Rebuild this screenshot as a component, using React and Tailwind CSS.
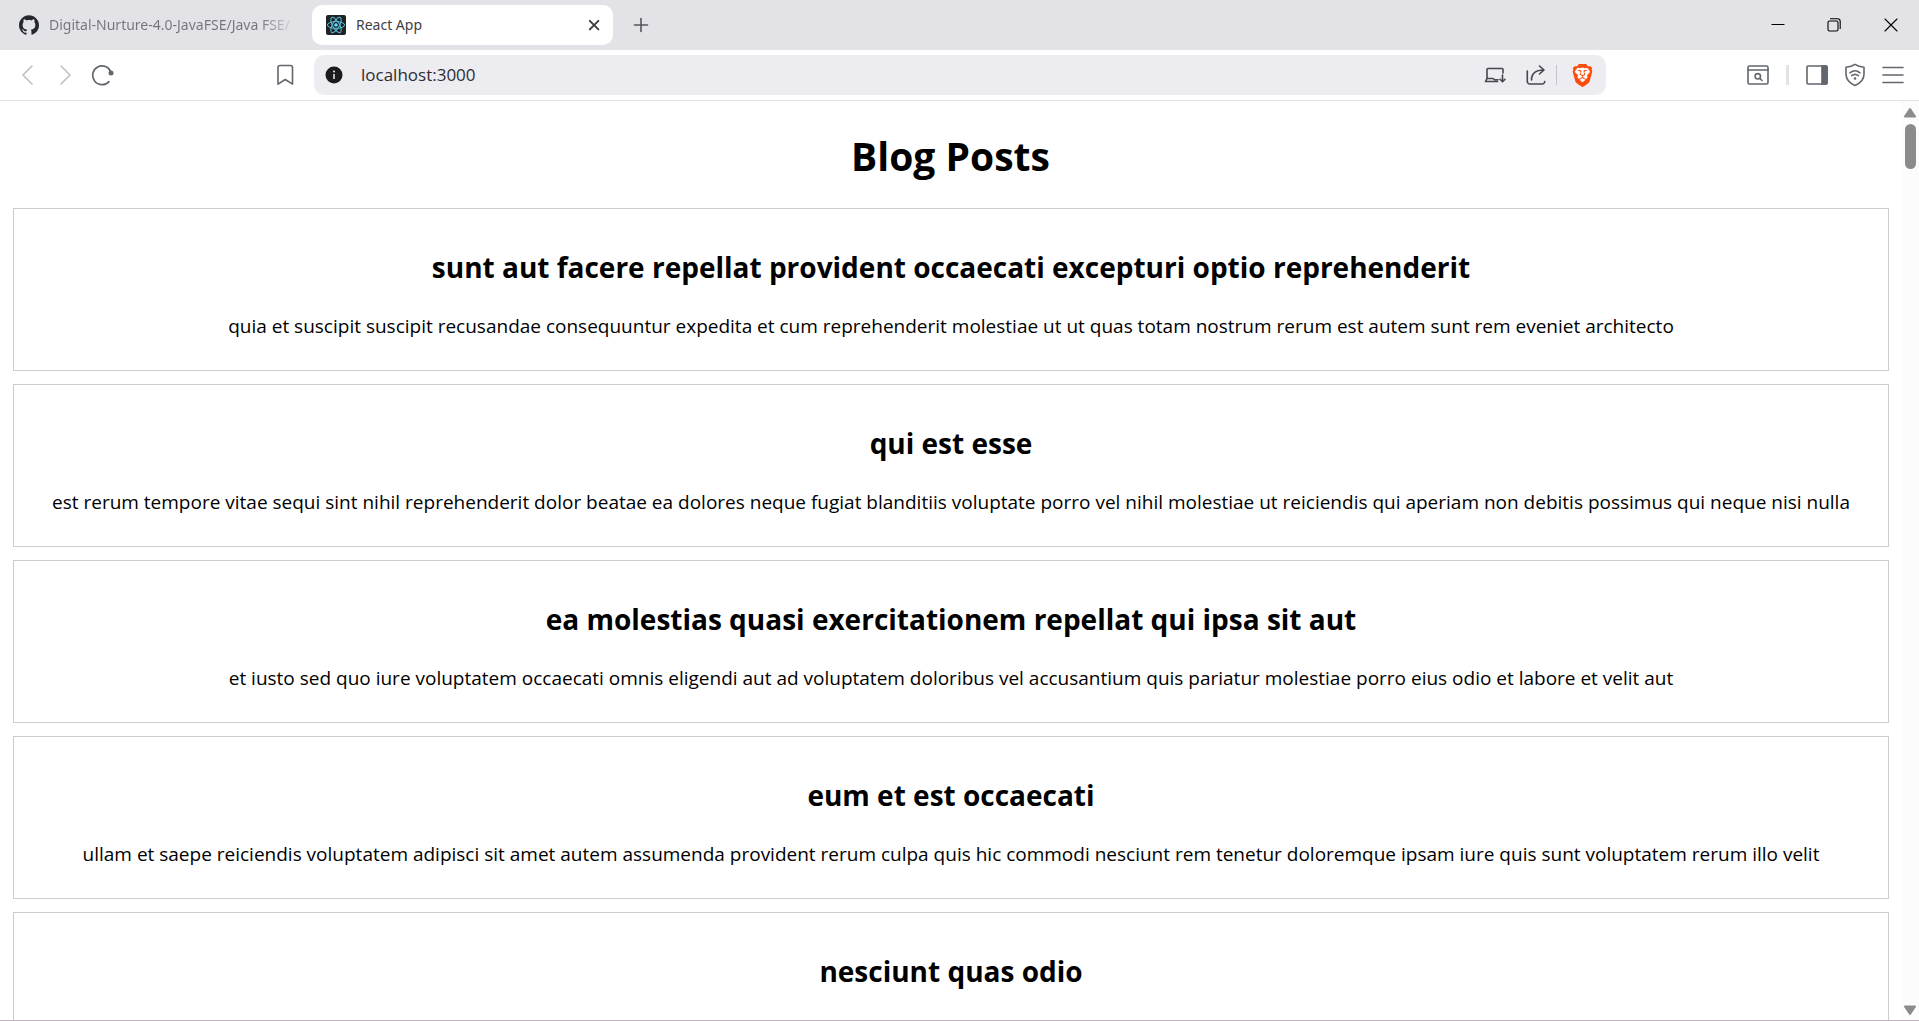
import React from "react";
import { SiBrave, SiGithub } from "react-icons/si";

const POSTS = [
  {
    title: "sunt aut facere repellat provident occaecati excepturi optio reprehenderit",
    body: "quia et suscipit suscipit recusandae consequuntur expedita et cum reprehenderit molestiae ut ut quas totam nostrum rerum est autem sunt rem eveniet architecto",
  },
  {
    title: "qui est esse",
    body: "est rerum tempore vitae sequi sint nihil reprehenderit dolor beatae ea dolores neque fugiat blanditiis voluptate porro vel nihil molestiae ut reiciendis qui aperiam non debitis possimus qui neque nisi nulla",
  },
  {
    title: "ea molestias quasi exercitationem repellat qui ipsa sit aut",
    body: "et iusto sed quo iure voluptatem occaecati omnis eligendi aut ad voluptatem doloribus vel accusantium quis pariatur molestiae porro eius odio et labore et velit aut",
  },
  {
    title: "eum et est occaecati",
    body: "ullam et saepe reiciendis voluptatem adipisci sit amet autem assumenda provident rerum culpa quis hic commodi nesciunt rem tenetur doloremque ipsam iure quis sunt voluptatem rerum illo velit",
  },
  { title: "nesciunt quas odio", body: "" },
];

function Icon({ size = 24, className = "", children, ...rest }) {
  return (
    <svg
      width={size}
      height={size}
      viewBox={`0 0 ${size} ${size}`}
      fill="none"
      stroke="currentColor"
      strokeWidth="1.6"
      strokeLinecap="round"
      strokeLinejoin="round"
      className={className}
      aria-hidden="true"
      {...rest}
    >
      {children}
    </svg>
  );
}

function IconButton({ label, className = "", children }) {
  return (
    <button type="button" aria-label={label} className={`flex shrink-0 items-center justify-center ${className}`}>
      {children}
    </button>
  );
}

function ReactLogo() {
  return (
    <svg width="20" height="20" viewBox="0 0 20 20" className="shrink-0" aria-hidden="true">
      <rect width="20" height="20" rx="2" fill="#222222" />
      <g fill="none" stroke="#53c1de" strokeWidth="1">
        <ellipse cx="10" cy="10" rx="8.6" ry="3.4" />
        <ellipse cx="10" cy="10" rx="8.6" ry="3.4" transform="rotate(60 10 10)" />
        <ellipse cx="10" cy="10" rx="8.6" ry="3.4" transform="rotate(120 10 10)" />
      </g>
      <circle cx="10" cy="10" r="1.8" fill="#61dafb" />
    </svg>
  );
}

function TabStrip() {
  return (
    <div className="flex h-[50px] shrink-0 items-center bg-[#e3e2e7] font-['Noto_Sans','Open_Sans',sans-serif]">
      <div className="flex w-[312px] shrink-0 items-center pl-[19px]">
        <SiGithub size={20} color="#24292f" className="shrink-0" />
        <span className="ml-[10px] w-[248px] overflow-hidden whitespace-nowrap bg-gradient-to-r from-[#74747a] from-85% to-transparent bg-clip-text text-[14px] leading-5 text-transparent">
          Digital-Nurture-4.0-JavaFSE/Java FSE/
        </span>
      </div>
      <div className="flex h-10 w-[301px] shrink-0 items-center rounded-[10px] bg-white pl-[14px] pr-[9px]">
        <ReactLogo />
        <span className="ml-[10px] flex-1 text-[14px] leading-5 text-[#3f4045]">React App</span>
        <IconButton label="Close tab" className="size-5">
          <Icon size={20} strokeWidth="1.9" className="text-[#3b3c40]">
            <path d="M5.8 5.8l8.6 8.6M14.4 5.8l-8.6 8.6" />
          </Icon>
        </IconButton>
      </div>
      <IconButton label="New tab" className="ml-4 size-6">
        <Icon className="text-[#55565b]">
          <path d="M12 5.5v13M5.5 12h13" />
        </Icon>
      </IconButton>
      <div className="ml-auto flex">
        <IconButton label="Minimize" className="h-[50px] w-[57px]">
          <Icon size={14} strokeWidth="1" strokeLinecap="butt" className="text-black">
            <path d="M0.5 6.5h13" />
          </Icon>
        </IconButton>
        <IconButton label="Restore" className="h-[50px] w-14">
          <Icon size={14} strokeWidth="1.1" className="text-black">
            <rect x="1" y="3" width="10" height="10" rx="1.5" />
            <path d="M3.5 .8h7a2.7 2.7 0 0 1 2.7 2.7v7" />
          </Icon>
        </IconButton>
        <IconButton label="Close" className="h-[50px] w-[57px]">
          <Icon size={14} strokeWidth="1.1" className="text-black">
            <path d="M1 1l12 12M13 1L1 13" />
          </Icon>
        </IconButton>
      </div>
    </div>
  );
}

function Toolbar() {
  return (
    <div className="flex h-[51px] shrink-0 items-center border-b border-[#e1e0e6] bg-white text-[#62666d]">
      <div className="flex w-[314px] shrink-0 items-center pl-[15px]">
        <IconButton label="Back" className="size-6">
          <Icon className="text-[#bfc0c4]">
            <path d="M17 3L8 12l9 9" />
          </Icon>
        </IconButton>
        <IconButton label="Forward" className="ml-[14px] size-6">
          <Icon className="text-[#bfc0c4]">
            <path d="M8 3l9 9-9 9" />
          </Icon>
        </IconButton>
        <IconButton label="Reload" className="ml-[13px] size-6">
          <Icon>
            <path d="M21 9.400A9.400 9.400 0 1 0 19 18.600" />
            <circle cx="21" cy="10" r="2.500" fill="currentColor" stroke="none" />
          </Icon>
        </IconButton>
        <IconButton label="Bookmark this tab" className="ml-[159px] size-6">
          <Icon>
            <path d="M7 2.500h10.500a2 2 0 0 1 2 2v16.700l-7.200-4.700-7.300 4.700V4.500a2 2 0 0 1 2-2z" />
          </Icon>
        </IconButton>
      </div>
      <div className="flex h-10 min-w-0 flex-1 items-center rounded-[10px] bg-[#edecf1] pl-[11px] pr-3 text-[#45474d]">
        <IconButton label="View site information" className="size-[18px]">
          <svg width="18" height="18" viewBox="0 0 18 18" aria-hidden="true">
            <circle cx="9" cy="9" r="8.500" fill="#1b1a1f" />
            <circle cx="9" cy="5.600" r="1" fill="#edecf1" />
            <path d="M9 8v5" stroke="#edecf1" strokeWidth="1.500" />
          </svg>
        </IconButton>
        <input
          type="text"
          aria-label="Address"
          defaultValue="localhost:3000"
          className="ml-[18px] min-w-0 flex-1 bg-transparent text-[17px] leading-6 text-[#2c2c33] outline-none"
        />
        <IconButton label="Install app" className="size-6">
          <Icon>
            <path d="M4 15.500V6.500a1 1 0 0 1 1-1h14a1 1 0 0 1 1 1v3.500" />
            <path d="M4 15.500h6l1.500 1.200h3.500M4 15.500L2.500 18.500h12" />
            <path d="M19.500 12v6.500M17 16.300l2.500 2.500 2.500-2.500" />
          </Icon>
        </IconButton>
        <IconButton label="Share" className="ml-[17px] size-6">
          <Icon>
            <path d="M3.300 8v10.500a2.500 2.500 0 0 0 2.500 2.500h12.400a2.500 2.500 0 0 0 2.500-2.500" />
            <path d="M7.500 17c0-6 3.500-10 12.500-10M15.500 3l4.500 4-4.500 4" />
          </Icon>
        </IconButton>
        <span className="ml-2 h-5 w-px bg-[#c4c4ca]" />
        <IconButton label="Brave Shields" className="relative ml-[13px] size-6">
          <span className="absolute size-3.5 rounded-md bg-white" />
          <SiBrave size={23} color="#ff4c0c" className="relative" />
        </IconButton>
      </div>
      <div className="flex w-[313px] shrink-0 items-center justify-end pr-[14px]">
        <IconButton label="Search tabs" className="size-6">
          <Icon>
            <rect x="2" y="3" width="20" height="18" rx="1.500" />
            <path d="M2 7h20" />
            <circle cx="11.800" cy="13.300" r="2.700" />
            <path d="M14 15.500l2 2" />
          </Icon>
        </IconButton>
        <span className="ml-4 h-5 w-[3px] bg-[#e3e2e7]" />
        <IconButton label="Toggle sidebar" className="ml-4 size-6">
          <Icon>
            <rect x="2" y="3" width="20" height="18" rx="1" />
            <path d="M17 3h4a1 1 0 0 1 1 1v16a1 1 0 0 1-1 1h-4z" fill="currentColor" />
          </Icon>
        </IconButton>
        <IconButton label="VPN" className="ml-[14px] size-6">
          <Icon>
            <path d="M12 1.300c3 2 5.600 2.500 9 2.900v7c0 5-4 9-9 11.300-5-2.300-9-6.300-9-11.300v-7c3.400-.4 6-.9 9-2.900z" />
            <path d="M7 9.800c3-2.500 7-2.500 10 0M8.700 12.700c2-1.700 4.600-1.700 6.600 0" />
            <circle cx="12" cy="15.500" r="1.300" fill="currentColor" stroke="none" />
          </Icon>
        </IconButton>
        <IconButton label="Menu" className="ml-[14px] size-6">
          <Icon>
            <path d="M2 4.500h20M2 12h20M2 19.500h20" />
          </Icon>
        </IconButton>
      </div>
    </div>
  );
}

function Scrollbar() {
  return (
    <div className="flex w-[18px] shrink-0 flex-col items-center bg-[#fcfcfc] pb-1 pt-1.5 text-[#8b8b8b]" aria-hidden="true">
      <svg width="12" height="11" viewBox="0 0 12 11">
        <path d="M6 2l5 7.500H1z" fill="currentColor" stroke="currentColor" strokeWidth="2" strokeLinejoin="round" />
      </svg>
      <div className="mt-1.5 h-[45px] w-[11px] rounded-full bg-[#8b8b8b]" />
      <svg width="12" height="11" viewBox="0 0 12 11" className="mt-auto">
        <path d="M6 9l5-7.500H1z" fill="currentColor" stroke="currentColor" strokeWidth="2" strokeLinejoin="round" />
      </svg>
    </div>
  );
}

export default function App() {
  return (
    <div className="flex h-screen flex-col overflow-hidden border-b border-[#bfb4bc] bg-white font-['Open_Sans','Noto_Sans',sans-serif]">
      <TabStrip />
      <Toolbar />
      <div className="flex min-h-0 flex-1">
        <main className="min-w-0 flex-1 overflow-hidden text-center text-black">
          <h1 className="mb-[26px] mt-7 text-[39px] font-bold leading-[53px]">Blog Posts</h1>
          {POSTS.map((post) => (
            <article
              key={post.title}
              className="mb-[13px] ml-[13px] mr-3 border border-[#cccccc] px-3 pb-[30px] pt-[38px]"
            >
              <h2 className="text-[28px] font-bold leading-10">{post.title}</h2>
              <p className="mt-[26px] min-h-[27px] text-[19px] leading-[27px]">{post.body}</p>
            </article>
          ))}
        </main>
        <Scrollbar />
      </div>
    </div>
  );
}
